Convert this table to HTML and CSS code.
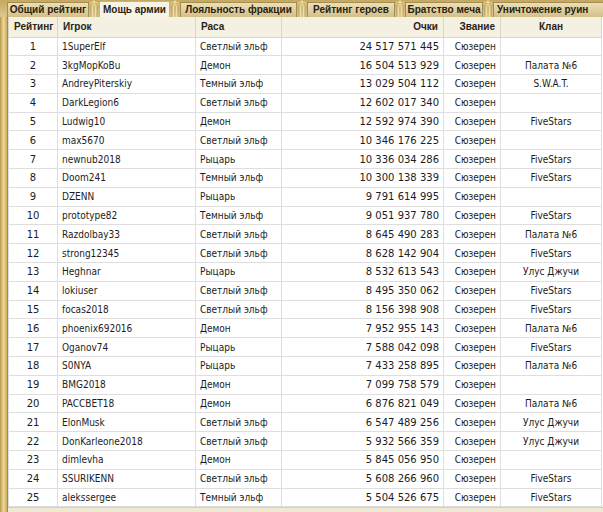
FILE: index.html
```html
<!DOCTYPE html>
<html lang="ru">
<head>
<meta charset="utf-8">
<title>Рейтинг</title>
<link rel="stylesheet" href="styles.css">
</head>
<body>
<div class="frame">
  <div class="tabs">
    <div class="tab t1">Общий рейтинг</div>
    <svg class="orn" viewBox="0 0 10 17" width="10" height="17"><path d="M3 17V6M7 17V6" stroke="#f6ecc0" stroke-width="1.4" fill="none"/><path d="M2 17V6M8 17V6" stroke="#a88d48" stroke-width=".7" fill="none"/><path d="M1 5c-.5-2 1.5-3.5 3-2.5s0 2.5-1 2M9 5c.5-2-1.5-3.5-3-2.5s0 2.5 1 2M2.5 6h5M5 1.5v4.5" stroke="#e4cf8c" stroke-width="1.1" fill="none"/><circle cx="5" cy="1.5" r="1.1" fill="#f4e6b0"/></svg>
    <div class="tab t2 active">Мощь армии</div>
    <svg class="orn" viewBox="0 0 10 17" width="10" height="17"><path d="M3 17V6M7 17V6" stroke="#f6ecc0" stroke-width="1.4" fill="none"/><path d="M2 17V6M8 17V6" stroke="#a88d48" stroke-width=".7" fill="none"/><path d="M1 5c-.5-2 1.5-3.5 3-2.5s0 2.5-1 2M9 5c.5-2-1.5-3.5-3-2.5s0 2.5 1 2M2.5 6h5M5 1.5v4.5" stroke="#e4cf8c" stroke-width="1.1" fill="none"/><circle cx="5" cy="1.5" r="1.1" fill="#f4e6b0"/></svg>
    <div class="tab t3">Лояльность фракции</div>
    <svg class="orn" viewBox="0 0 10 17" width="10" height="17"><path d="M3 17V6M7 17V6" stroke="#f6ecc0" stroke-width="1.4" fill="none"/><path d="M2 17V6M8 17V6" stroke="#a88d48" stroke-width=".7" fill="none"/><path d="M1 5c-.5-2 1.5-3.5 3-2.5s0 2.5-1 2M9 5c.5-2-1.5-3.5-3-2.5s0 2.5 1 2M2.5 6h5M5 1.5v4.5" stroke="#e4cf8c" stroke-width="1.1" fill="none"/><circle cx="5" cy="1.5" r="1.1" fill="#f4e6b0"/></svg>
    <div class="tab t4">Рейтинг героев</div>
    <svg class="orn" viewBox="0 0 10 17" width="10" height="17"><path d="M3 17V6M7 17V6" stroke="#f6ecc0" stroke-width="1.4" fill="none"/><path d="M2 17V6M8 17V6" stroke="#a88d48" stroke-width=".7" fill="none"/><path d="M1 5c-.5-2 1.5-3.5 3-2.5s0 2.5-1 2M9 5c.5-2-1.5-3.5-3-2.5s0 2.5 1 2M2.5 6h5M5 1.5v4.5" stroke="#e4cf8c" stroke-width="1.1" fill="none"/><circle cx="5" cy="1.5" r="1.1" fill="#f4e6b0"/></svg>
    <div class="tab t5">Братство меча</div>
    <svg class="orn" viewBox="0 0 10 17" width="10" height="17"><path d="M3 17V6M7 17V6" stroke="#f6ecc0" stroke-width="1.4" fill="none"/><path d="M2 17V6M8 17V6" stroke="#a88d48" stroke-width=".7" fill="none"/><path d="M1 5c-.5-2 1.5-3.5 3-2.5s0 2.5-1 2M9 5c.5-2-1.5-3.5-3-2.5s0 2.5 1 2M2.5 6h5M5 1.5v4.5" stroke="#e4cf8c" stroke-width="1.1" fill="none"/><circle cx="5" cy="1.5" r="1.1" fill="#f4e6b0"/></svg>
    <div class="tab t6">Уничтожение руин</div>
  </div>
  <div class="body">
    <div class="side"></div>
    <div class="wrap">
      <table class="grid">
        <colgroup>
          <col class="c-rank"><col class="c-player"><col class="c-race"><col class="c-score"><col class="c-title"><col class="c-clan">
        </colgroup>
        <thead>
          <tr><th class="ctr">Рейтинг</th><th>Игрок</th><th>Раса</th><th class="rgt">Очки</th><th class="rgt">Звание</th><th class="ctr">Клан</th></tr>
        </thead>
        <tbody>
          <tr><td class="ctr num">1</td><td>1SuperElf</td><td>Светлый эльф</td><td class="rgt num">24 517 571 445</td><td class="rgt">Сюзерен</td><td class="ctr"></td></tr>
          <tr><td class="ctr num">2</td><td>3kgMopKoBu</td><td>Демон</td><td class="rgt num">16 504 513 929</td><td class="rgt">Сюзерен</td><td class="ctr">Палата №6</td></tr>
          <tr><td class="ctr num">3</td><td>AndreyPiterskiy</td><td>Темный эльф</td><td class="rgt num">13 029 504 112</td><td class="rgt">Сюзерен</td><td class="ctr">S.W.A.T.</td></tr>
          <tr><td class="ctr num">4</td><td>DarkLegion6</td><td>Светлый эльф</td><td class="rgt num">12 602 017 340</td><td class="rgt">Сюзерен</td><td class="ctr"></td></tr>
          <tr><td class="ctr num">5</td><td>Ludwig10</td><td>Демон</td><td class="rgt num">12 592 974 390</td><td class="rgt">Сюзерен</td><td class="ctr">FiveStars</td></tr>
          <tr><td class="ctr num">6</td><td>max5670</td><td>Светлый эльф</td><td class="rgt num">10 346 176 225</td><td class="rgt">Сюзерен</td><td class="ctr"></td></tr>
          <tr><td class="ctr num">7</td><td>newnub2018</td><td>Рыцарь</td><td class="rgt num">10 336 034 286</td><td class="rgt">Сюзерен</td><td class="ctr">FiveStars</td></tr>
          <tr><td class="ctr num">8</td><td>Doom241</td><td>Темный эльф</td><td class="rgt num">10 300 138 339</td><td class="rgt">Сюзерен</td><td class="ctr">FiveStars</td></tr>
          <tr><td class="ctr num">9</td><td>DZENN</td><td>Рыцарь</td><td class="rgt num">9 791 614 995</td><td class="rgt">Сюзерен</td><td class="ctr"></td></tr>
          <tr><td class="ctr num">10</td><td>prototype82</td><td>Темный эльф</td><td class="rgt num">9 051 937 780</td><td class="rgt">Сюзерен</td><td class="ctr">FiveStars</td></tr>
          <tr><td class="ctr num">11</td><td>Razdolbay33</td><td>Светлый эльф</td><td class="rgt num">8 645 490 283</td><td class="rgt">Сюзерен</td><td class="ctr">Палата №6</td></tr>
          <tr><td class="ctr num">12</td><td>strong12345</td><td>Светлый эльф</td><td class="rgt num">8 628 142 904</td><td class="rgt">Сюзерен</td><td class="ctr">FiveStars</td></tr>
          <tr><td class="ctr num">13</td><td>Heghnar</td><td>Рыцарь</td><td class="rgt num">8 532 613 543</td><td class="rgt">Сюзерен</td><td class="ctr">Улус Джучи</td></tr>
          <tr><td class="ctr num">14</td><td>lokiuser</td><td>Светлый эльф</td><td class="rgt num">8 495 350 062</td><td class="rgt">Сюзерен</td><td class="ctr">FiveStars</td></tr>
          <tr><td class="ctr num">15</td><td>focas2018</td><td>Светлый эльф</td><td class="rgt num">8 156 398 908</td><td class="rgt">Сюзерен</td><td class="ctr">FiveStars</td></tr>
          <tr><td class="ctr num">16</td><td>phoenix692016</td><td>Демон</td><td class="rgt num">7 952 955 143</td><td class="rgt">Сюзерен</td><td class="ctr">Палата №6</td></tr>
          <tr><td class="ctr num">17</td><td>Oganov74</td><td>Рыцарь</td><td class="rgt num">7 588 042 098</td><td class="rgt">Сюзерен</td><td class="ctr">FiveStars</td></tr>
          <tr><td class="ctr num">18</td><td>S0NYA</td><td>Рыцарь</td><td class="rgt num">7 433 258 895</td><td class="rgt">Сюзерен</td><td class="ctr">Палата №6</td></tr>
          <tr><td class="ctr num">19</td><td>BMG2018</td><td>Демон</td><td class="rgt num">7 099 758 579</td><td class="rgt">Сюзерен</td><td class="ctr"></td></tr>
          <tr><td class="ctr num">20</td><td>PACCBET18</td><td>Демон</td><td class="rgt num">6 876 821 049</td><td class="rgt">Сюзерен</td><td class="ctr">Палата №6</td></tr>
          <tr><td class="ctr num">21</td><td>ElonMusk</td><td>Светлый эльф</td><td class="rgt num">6 547 489 256</td><td class="rgt">Сюзерен</td><td class="ctr">Улус Джучи</td></tr>
          <tr><td class="ctr num">22</td><td>DonKarleone2018</td><td>Светлый эльф</td><td class="rgt num">5 932 566 359</td><td class="rgt">Сюзерен</td><td class="ctr">Улус Джучи</td></tr>
          <tr><td class="ctr num">23</td><td>dimlevha</td><td>Демон</td><td class="rgt num">5 845 056 950</td><td class="rgt">Сюзерен</td><td class="ctr"></td></tr>
          <tr><td class="ctr num">24</td><td>SSURIKENN</td><td>Светлый эльф</td><td class="rgt num">5 608 266 960</td><td class="rgt">Сюзерен</td><td class="ctr">FiveStars</td></tr>
          <tr><td class="ctr num">25</td><td>alekssergee</td><td>Темный эльф</td><td class="rgt num">5 504 526 675</td><td class="rgt">Сюзерен</td><td class="ctr">FiveStars</td></tr>
        </tbody>
      </table>
      <div class="foot"></div>
    </div>
  </div>
</div>
</body>
</html>
```
FILE: styles.css
```css
html, body {
  margin: 0;
  padding: 0;
}
body {
  width: 603px;
  height: 512px;
  overflow: hidden;
  background: #ffffff;
  font-family: "DejaVu Sans Condensed", "DejaVu Sans", Verdana, sans-serif;
  font-stretch: condensed;
  font-size: 10px;
  color: #1c1c22;
}
.frame {
  display: flex;
  flex-direction: column;
  height: 512px;
}
.tabs {
  display: flex;
  align-items: flex-end;
  height: 17px;
  flex: none;
  padding-left: 7px;
  background: linear-gradient(#c4a95f, #dcc78c);
  white-space: nowrap;
  overflow: hidden;
}
.orn {
  flex: none;
  display: block;
}
.tab {
  flex: none;
  height: 15px;
  box-sizing: border-box;
  padding: 0;
  line-height: 14px;
  text-align: center;
  font-family: "Liberation Sans", Arial, sans-serif;
  font-stretch: normal;
  font-weight: bold;
  font-size: 10px;
  color: #2a2210;
  background: linear-gradient(#ebdfb8, #d3bf88);
  border: 1px solid #a58c52;
  border-bottom: none;
}
.t1 { width: 82px; }
.t2 { width: 71px; }
.t3 { width: 117px; }
.t4 { width: 88px; }
.t5 { width: 78px; }
.t6 { width: 112px; text-align: left; padding-left: 3px; }
.tab.active {
  height: 16px;
  line-height: 15px;
  background: #f7f3e6;
  border-color: #c9b37a;
}
.body {
  display: flex;
  flex: 1;
  min-height: 0;
}
.side {
  flex: none;
  width: 7px;
  background: linear-gradient(90deg, #b8974a, #ecd998 50%, #c9aa5c);
  border-right: 1px solid #9c8a5c;
}
.wrap {
  flex: 1;
  display: flex;
  flex-direction: column;
  min-width: 0;
}
.grid {
  border-collapse: collapse;
  table-layout: fixed;
  width: 593px;
  flex: none;
}
.c-rank { width: 49px; }
.c-player { width: 138px; }
.c-race { width: 86px; }
.c-score { width: 162px; }
.c-title { width: 57px; }
.c-clan { width: 101px; }
.grid th {
  height: 20px;
  padding: 0 5px;
  box-sizing: border-box;
  font-family: "Liberation Sans", Arial, sans-serif;
  font-stretch: normal;
  font-weight: bold;
  font-size: 10px;
  color: #2a2417;
  text-align: left;
  background: #f4f0e2;
  border: 1px solid #dcd6c4;
  border-top: none;
}
.grid td {
  height: 18.8px;
  padding: 0 4px;
  box-sizing: border-box;
  border: 1px solid #dedede;
  white-space: nowrap;
  overflow: hidden;
}
.grid td.num {
  font-family: "DejaVu Sans", Verdana, sans-serif;
  font-stretch: normal;
}
.grid .ctr { text-align: center; }
.grid .rgt { text-align: right; }
.foot {
  flex: 1;
  background: #efe8d2;
  border-top: 1px solid #d9d0b4;
}
```
